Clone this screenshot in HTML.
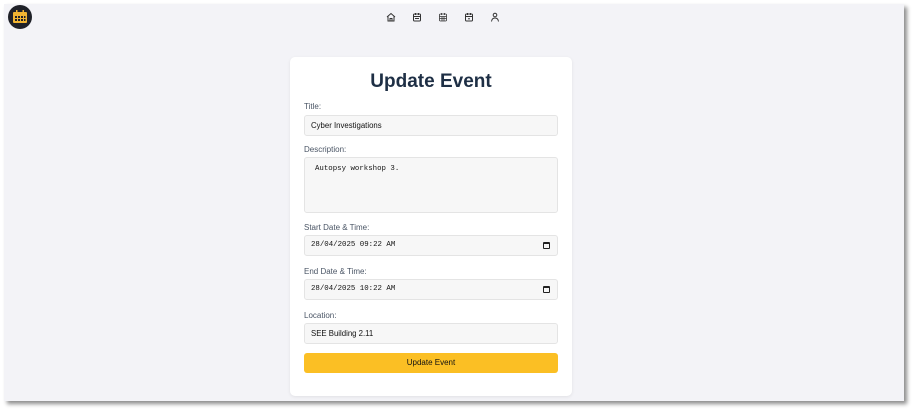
<!DOCTYPE html>
<html><head><style>
*{box-sizing:border-box;margin:0;padding:0}
body{width:915px;height:412px;background:#fff;position:relative;overflow:hidden;font-family:"Liberation Sans",sans-serif}
.page{position:absolute;left:4px;top:4px;width:900px;height:397px;background:#f3f3f7;box-shadow:3px 3px 4px rgba(0,0,0,.45)}
.logo{position:absolute;left:4px;top:1px;width:24px;height:24px;border-radius:50%;background:#1f2128}
.ic{position:absolute;top:8px}
.card{position:absolute;left:290px;top:57px;width:282px;height:339px;background:#fff;border-radius:5px;box-shadow:0 1px 3px rgba(0,0,0,.08)}
h1{position:absolute;left:0;width:100%;top:14px;text-align:center;font-size:19px;font-weight:bold;color:#1e2f45}
.l{position:absolute;left:14px;font-size:8px;color:#4a5565}
.in{position:absolute;left:14px;width:254px;height:21px;background:#f7f7f7;border:1px solid #e4e4e4;border-radius:3px;font-size:7.8px;color:#111;padding-left:6px;line-height:19px}
.mono{font-family:"Liberation Mono",monospace;font-size:7.4px}
.cal{position:absolute;right:7px;top:6px;width:7px;height:7px;border:1.3px solid #222;border-top-width:2px;border-radius:1px}
.btn{position:absolute;left:14px;top:296px;width:254px;height:20px;background:#fbbf24;border-radius:3px;text-align:center;font-size:8px;line-height:20px;color:#111}
</style></head><body>
<div class="page">
<div class="logo"><svg width="24" height="24" viewBox="0 0 24 24"><rect x="5" y="7" width="14" height="11" rx="1" fill="#f2b532"/><rect x="8" y="5" width="1.5" height="3" fill="#f2b532"/><rect x="14.5" y="5" width="1.5" height="3" fill="#f2b532"/><g fill="#1f2128"><rect x="7" y="11" width="2" height="2"/><rect x="10" y="11" width="2" height="2"/><rect x="13" y="11" width="2" height="2"/><rect x="16" y="11" width="1.5" height="2"/><rect x="7" y="14" width="2" height="2"/><rect x="10" y="14" width="2" height="2"/><rect x="13" y="14" width="2" height="2"/><rect x="16" y="14" width="1.5" height="2"/></g></svg></div>
<svg class="ic" style="left:382px" width="10" height="10" viewBox="0 0 10 10" fill="none" stroke="#333" stroke-width="1"><path d="M1 5L5 1.5L9 5M2 4.2V9H8V4.2M4 9V6.5H6V9"/></svg>
<svg class="ic" style="left:408px" width="10" height="10" viewBox="0 0 10 10" fill="none" stroke="#333" stroke-width="1"><rect x="1.5" y="2" width="7" height="7" rx="1"/><path d="M3.5 1V3M6.5 1V3M1.5 4.5H8.5M3 6.5H7"/></svg>
<svg class="ic" style="left:434px" width="10" height="10" viewBox="0 0 10 10" fill="none" stroke="#333" stroke-width="0.8"><rect x="1.5" y="2" width="7" height="7" rx="1"/><path d="M3.5 1V3M6.5 1V3M1.5 4.5H8.5M1.5 6.5H8.5M4 4.5V9M6 4.5V9"/></svg>
<svg class="ic" style="left:460px" width="10" height="10" viewBox="0 0 10 10" fill="none" stroke="#333" stroke-width="1"><rect x="1.5" y="2" width="7" height="7" rx="1"/><path d="M3.5 1V3M6.5 1V3M1.5 4.5H8.5"/><rect x="4.3" y="6" width="1.4" height="1.4" fill="#333" stroke="none"/></svg>
<svg class="ic" style="left:486px" width="10" height="10" viewBox="0 0 10 10" fill="none" stroke="#333" stroke-width="1"><circle cx="5" cy="3" r="1.8"/><path d="M1.5 9.5C1.8 7 3.2 6 5 6S8.2 7 8.5 9.5"/></svg>
</div>
<div class="card">
<h1>Update Event</h1>
<div class="l" style="top:45px">Title:</div>
<div class="in" style="top:58px">Cyber Investigations</div>
<div class="l" style="top:88px">Description:</div>
<div class="in mono" style="top:100px;height:56px;padding:5px 10px;line-height:12px">Autopsy workshop 3.</div>
<div class="l" style="top:166px">Start Date &amp; Time:</div>
<div class="in mono" style="top:178px">28/04/2025 09:22 AM<span class="cal"></span></div>
<div class="l" style="top:210px">End Date &amp; Time:</div>
<div class="in mono" style="top:222px">28/04/2025 10:22 AM<span class="cal"></span></div>
<div class="l" style="top:254px">Location:</div>
<div class="in" style="top:266px">SEE Building 2.11</div>
<div class="btn">Update Event</div>
</div>
</body></html>
